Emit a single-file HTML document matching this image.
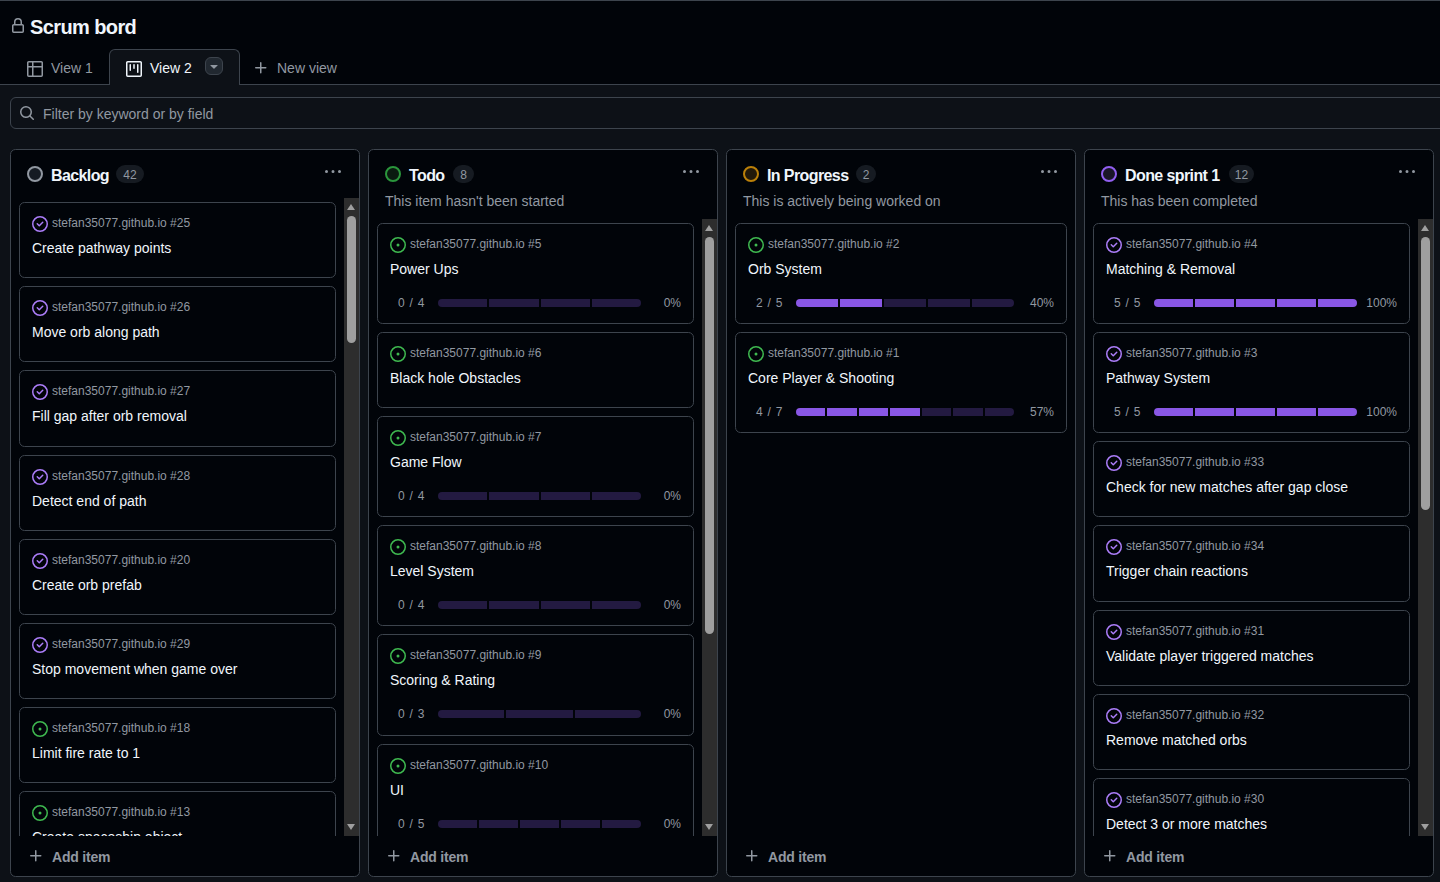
<!DOCTYPE html><html><head><meta charset="utf-8"><style>
*{box-sizing:border-box}
html,body{margin:0;padding:0}
body{width:1440px;height:882px;overflow:hidden;position:relative;background:#0d1117;font-family:"Liberation Sans",sans-serif;color:#f0f6fc}
.hdr{position:absolute;left:0;top:0;width:1440px;height:85px;background:#010409;border-top:1px solid #3d444d;border-bottom:1px solid #3d444d}
.lock{position:absolute;left:10px;top:18px}
.title{position:absolute;left:30px;top:14px;font-size:20px;font-weight:bold;line-height:26px;letter-spacing:-0.6px;color:#f0f6fc}
.tab{position:absolute;top:49px;height:36px;font-size:14px;line-height:20px;color:#9198a1}
.tabsel{position:absolute;left:109px;top:49px;width:131px;height:36px;background:#0d1117;border:1px solid #3d444d;border-bottom:none;border-radius:6px 6px 0 0}
.tabtxt{position:absolute;font-size:14px;line-height:20px;top:58px}
.ddb{position:absolute;left:205px;top:57px;width:18px;height:18px;border-radius:6px;background:#212830;border:1px solid #3d444d}
.filter{position:absolute;left:10px;top:97px;width:1450px;height:32px;border:1px solid #3d444d;border-radius:6px;background:#0d1117}
.ftxt{position:absolute;left:43px;top:104px;font-size:14px;line-height:20px;color:#9198a1}
.col{position:absolute;top:149px;width:350px;height:728px;background:#010409;border:1px solid #3d444d;border-radius:5.5px}
.cic{position:absolute;top:166px}
.ctitle{position:absolute;top:165.5px;font-size:16px;font-weight:bold;line-height:20px;letter-spacing:-0.6px;color:#f0f6fc;white-space:nowrap}
.pill{position:absolute;top:165px;height:18px;padding-top:2px;font-size:12px;line-height:17px;border-radius:9px;background:#161b22;color:#9198a1;text-align:center}
.kebab{position:absolute;top:164px;width:16px;height:16px}
.cdesc{position:absolute;top:191px;font-size:14px;line-height:20px;color:#9198a1;white-space:nowrap}
.clip{position:absolute;overflow:hidden}
.card{position:absolute;border:1px solid #3d444d;border-radius:5.5px;background:#010409}
.card .ic{position:absolute;left:12px;top:13px;width:16px;height:16px}
.card .ic svg{display:block}
.card .repo{position:absolute;left:32px;top:12px;font-size:12px;line-height:16px;color:#9198a1;white-space:nowrap}
.card .ttl{position:absolute;left:12px;top:35px;font-size:14px;line-height:20px;color:#f0f6fc;white-space:nowrap}
.plab{position:absolute;left:20px;top:71px;word-spacing:1.5px;font-size:12px;line-height:16px;color:#9198a1;white-space:nowrap}
.bar{position:absolute;left:60px;top:75px;height:8px;display:flex;gap:2px;border-radius:4px;overflow:hidden}
.bar span{flex:1;height:8px}
.pct{position:absolute;right:12px;top:71px;font-size:12px;line-height:16px;color:#9198a1}
.track{position:absolute;width:15px;background:#2d2d2d}
.thumb{position:absolute;left:3px;width:9px;background:#9f9f9f;border-radius:5.5px}
.up{position:absolute;left:3px;top:6px;width:0;height:0;border-left:4.5px solid transparent;border-right:4.5px solid transparent;border-bottom:6px solid #9f9f9f}
.dn{position:absolute;left:3px;bottom:6px;width:0;height:0;border-left:4.5px solid transparent;border-right:4.5px solid transparent;border-top:6px solid #9f9f9f}
.add{position:absolute;top:847px;height:20px;font-size:14px;line-height:20px;color:#9198a1;white-space:nowrap}
.add svg{position:absolute;left:8px;top:1px}
.add span{position:absolute;left:32px;top:0;font-weight:bold;letter-spacing:-0.2px}
</style></head><body><div class="hdr"></div><svg class="lock" width="16" height="16" viewBox="0 0 16 16" fill="#9198a1"><path d="M4 4a4 4 0 0 1 8 0v2h.25c.966 0 1.75.784 1.75 1.75v5.5A1.75 1.75 0 0 1 12.25 15h-8.5A1.75 1.75 0 0 1 2 13.25v-5.5C2 6.784 2.784 6 3.75 6H4Zm8.25 3.5h-8.5a.25.25 0 0 0-.25.25v5.5c0 .138.112.25.25.25h8.5a.25.25 0 0 0 .25-.25v-5.5a.25.25 0 0 0-.25-.25ZM10.5 6V4a2.5 2.5 0 1 0-5 0v2Z"/></svg><div class="title">Scrum bord</div><div class="tabsel"></div><svg style="position:absolute;left:27px;top:61px" width="16" height="16" viewBox="0 0 16 16" fill="#9198a1"><path d="M0 1.75C0 .784.784 0 1.75 0h12.5C15.216 0 16 .784 16 1.75v12.5A1.75 1.75 0 0 1 14.25 16H1.75A1.75 1.75 0 0 1 0 14.25ZM6.5 6.5v8h7.75a.25.25 0 0 0 .25-.25V6.5Zm8-1.5V1.75a.25.25 0 0 0-.25-.25H6.5V5Zm-13 1.5v7.75c0 .138.112.25.25.25H5v-8ZM5 5V1.5H1.75a.25.25 0 0 0-.25.25V5Z"/></svg><div class="tabtxt" style="left:51px;color:#9198a1">View 1</div><svg style="position:absolute;left:126px;top:61px" width="16" height="16" viewBox="0 0 16 16" fill="#f0f6fc"><path d="M1.75 0h12.5C15.216 0 16 .784 16 1.75v12.5A1.75 1.75 0 0 1 14.25 16H1.75A1.75 1.75 0 0 1 0 14.25V1.75C0 .784.784 0 1.75 0ZM1.5 1.75v12.5c0 .138.112.25.25.25h12.5a.25.25 0 0 0 .25-.25V1.75a.25.25 0 0 0-.25-.25H1.75a.25.25 0 0 0-.25.25ZM11.75 3a.75.75 0 0 1 .75.75v7.5a.75.75 0 0 1-1.5 0v-7.5a.75.75 0 0 1 .75-.75Zm-8.25.75a.75.75 0 0 1 1.5 0v5.5a.75.75 0 0 1-1.5 0ZM8 3a.75.75 0 0 1 .75.75v3.5a.75.75 0 0 1-1.5 0v-3.5A.75.75 0 0 1 8 3Z"/></svg><div class="tabtxt" style="left:150px;color:#f0f6fc">View 2</div><div class="ddb"><svg style="position:absolute;left:0px;top:0px" width="16" height="16" viewBox="0 0 16 16" fill="#9198a1"><path d="m4.427 7.427 3.396 3.396a.25.25 0 0 0 .354 0l3.396-3.396A.25.25 0 0 0 11.396 7H4.604a.25.25 0 0 0-.177.427Z"/></svg></div><svg style="position:absolute;left:253px;top:60px" width="16" height="16" viewBox="0 0 16 16" fill="#9198a1"><path d="M7.75 2a.75.75 0 0 1 .75.75V7h4.25a.75.75 0 0 1 0 1.5H8.5v4.25a.75.75 0 0 1-1.5 0V8.5H2.75a.75.75 0 0 1 0-1.5H7V2.75A.75.75 0 0 1 7.75 2Z"/></svg><div class="tabtxt" style="left:277px;color:#9198a1">New view</div><div class="filter"></div><svg style="position:absolute;left:19px;top:105px" width="16" height="16" viewBox="0 0 16 16" fill="#9198a1"><path d="M10.68 11.74a6 6 0 0 1-7.922-8.982 6 6 0 0 1 8.982 7.922l3.04 3.04a.749.749 0 0 1-.326 1.275.749.749 0 0 1-.734-.215ZM11.5 7a4.499 4.499 0 1 0-8.997 0A4.499 4.499 0 0 0 11.5 7Z"/></svg><div class="ftxt">Filter by keyword or by field</div><div class="col" style="left:10px"></div><div class="pill" style="left:116px;width:28px">42</div><svg class="cic" style="left:27px" width="16" height="16" viewBox="0 0 16 16"><circle cx="8" cy="8" r="7" fill="#151b23" stroke="#9198a1" stroke-width="2"/></svg><div class="ctitle" style="left:51px">Backlog</div><div class="kebab" style="left:325px"><svg width="16" height="16" viewBox="0 0 16 16" fill="#9198a1"><path d="M8 9a1.5 1.5 0 1 0 0-3 1.5 1.5 0 0 0 0 3ZM1.5 9a1.5 1.5 0 1 0 0-3 1.5 1.5 0 0 0 0 3Zm13 0a1.5 1.5 0 1 0 0-3 1.5 1.5 0 0 0 0 3Z"/></svg></div><div class="clip" style="left:11px;top:198px;width:348px;height:638px"><div class="card" style="left:8px;top:4px;width:317px;height:76px"><div class="ic"><svg width="16" height="16" viewBox="0 0 16 16" fill="#ab7df8"><path d="M11.28 6.78a.75.75 0 0 0-1.06-1.06L7.25 8.69 5.78 7.22a.75.75 0 0 0-1.06 1.06l2 2a.75.75 0 0 0 1.06 0l3.5-3.5Z"/><path d="M16 8A8 8 0 1 1 0 8a8 8 0 0 1 16 0Zm-1.5 0a6.5 6.5 0 1 0-13 0 6.5 6.5 0 0 0 13 0Z"/></svg></div><div class="repo">stefan35077.github.io #25</div><div class="ttl">Create pathway points</div></div><div class="card" style="left:8px;top:88px;width:317px;height:76px"><div class="ic"><svg width="16" height="16" viewBox="0 0 16 16" fill="#ab7df8"><path d="M11.28 6.78a.75.75 0 0 0-1.06-1.06L7.25 8.69 5.78 7.22a.75.75 0 0 0-1.06 1.06l2 2a.75.75 0 0 0 1.06 0l3.5-3.5Z"/><path d="M16 8A8 8 0 1 1 0 8a8 8 0 0 1 16 0Zm-1.5 0a6.5 6.5 0 1 0-13 0 6.5 6.5 0 0 0 13 0Z"/></svg></div><div class="repo">stefan35077.github.io #26</div><div class="ttl">Move orb along path</div></div><div class="card" style="left:8px;top:172px;width:317px;height:77px"><div class="ic"><svg width="16" height="16" viewBox="0 0 16 16" fill="#ab7df8"><path d="M11.28 6.78a.75.75 0 0 0-1.06-1.06L7.25 8.69 5.78 7.22a.75.75 0 0 0-1.06 1.06l2 2a.75.75 0 0 0 1.06 0l3.5-3.5Z"/><path d="M16 8A8 8 0 1 1 0 8a8 8 0 0 1 16 0Zm-1.5 0a6.5 6.5 0 1 0-13 0 6.5 6.5 0 0 0 13 0Z"/></svg></div><div class="repo">stefan35077.github.io #27</div><div class="ttl">Fill gap after orb removal</div></div><div class="card" style="left:8px;top:257px;width:317px;height:76px"><div class="ic"><svg width="16" height="16" viewBox="0 0 16 16" fill="#ab7df8"><path d="M11.28 6.78a.75.75 0 0 0-1.06-1.06L7.25 8.69 5.78 7.22a.75.75 0 0 0-1.06 1.06l2 2a.75.75 0 0 0 1.06 0l3.5-3.5Z"/><path d="M16 8A8 8 0 1 1 0 8a8 8 0 0 1 16 0Zm-1.5 0a6.5 6.5 0 1 0-13 0 6.5 6.5 0 0 0 13 0Z"/></svg></div><div class="repo">stefan35077.github.io #28</div><div class="ttl">Detect end of path</div></div><div class="card" style="left:8px;top:341px;width:317px;height:76px"><div class="ic"><svg width="16" height="16" viewBox="0 0 16 16" fill="#ab7df8"><path d="M11.28 6.78a.75.75 0 0 0-1.06-1.06L7.25 8.69 5.78 7.22a.75.75 0 0 0-1.06 1.06l2 2a.75.75 0 0 0 1.06 0l3.5-3.5Z"/><path d="M16 8A8 8 0 1 1 0 8a8 8 0 0 1 16 0Zm-1.5 0a6.5 6.5 0 1 0-13 0 6.5 6.5 0 0 0 13 0Z"/></svg></div><div class="repo">stefan35077.github.io #20</div><div class="ttl">Create orb prefab</div></div><div class="card" style="left:8px;top:425px;width:317px;height:76px"><div class="ic"><svg width="16" height="16" viewBox="0 0 16 16" fill="#ab7df8"><path d="M11.28 6.78a.75.75 0 0 0-1.06-1.06L7.25 8.69 5.78 7.22a.75.75 0 0 0-1.06 1.06l2 2a.75.75 0 0 0 1.06 0l3.5-3.5Z"/><path d="M16 8A8 8 0 1 1 0 8a8 8 0 0 1 16 0Zm-1.5 0a6.5 6.5 0 1 0-13 0 6.5 6.5 0 0 0 13 0Z"/></svg></div><div class="repo">stefan35077.github.io #29</div><div class="ttl">Stop movement when game over</div></div><div class="card" style="left:8px;top:509px;width:317px;height:76px"><div class="ic"><svg width="16" height="16" viewBox="0 0 16 16" fill="#3fb950"><path d="M8 9.5a1.5 1.5 0 1 0 0-3 1.5 1.5 0 0 0 0 3Z"/><path d="M8 0a8 8 0 1 1 0 16A8 8 0 0 1 8 0ZM1.5 8a6.5 6.5 0 1 0 13 0 6.5 6.5 0 0 0-13 0Z"/></svg></div><div class="repo">stefan35077.github.io #18</div><div class="ttl">Limit fire rate to 1</div></div><div class="card" style="left:8px;top:593px;width:317px;height:76px"><div class="ic"><svg width="16" height="16" viewBox="0 0 16 16" fill="#3fb950"><path d="M8 9.5a1.5 1.5 0 1 0 0-3 1.5 1.5 0 0 0 0 3Z"/><path d="M8 0a8 8 0 1 1 0 16A8 8 0 0 1 8 0ZM1.5 8a6.5 6.5 0 1 0 13 0 6.5 6.5 0 0 0-13 0Z"/></svg></div><div class="repo">stefan35077.github.io #13</div><div class="ttl">Create spaceship object</div></div><div class="track" style="left:333px;top:0;height:638px"><div class="up"></div><div class="dn"></div><div class="thumb" style="top:18px;height:127px"></div></div></div><div class="add" style="left:20px"><svg width="16" height="16" viewBox="0 0 16 16" fill="#9198a1"><path d="M7.75 2a.75.75 0 0 1 .75.75V7h4.25a.75.75 0 0 1 0 1.5H8.5v4.25a.75.75 0 0 1-1.5 0V8.5H2.75a.75.75 0 0 1 0-1.5H7V2.75A.75.75 0 0 1 7.75 2Z"/></svg><span>Add item</span></div><div class="col" style="left:368px"></div><div class="pill" style="left:453px;width:21px">8</div><svg class="cic" style="left:385px" width="16" height="16" viewBox="0 0 16 16"><circle cx="8" cy="8" r="7" fill="#0a1a10" stroke="#2a963c" stroke-width="2"/></svg><div class="ctitle" style="left:409px">Todo</div><div class="kebab" style="left:683px"><svg width="16" height="16" viewBox="0 0 16 16" fill="#9198a1"><path d="M8 9a1.5 1.5 0 1 0 0-3 1.5 1.5 0 0 0 0 3ZM1.5 9a1.5 1.5 0 1 0 0-3 1.5 1.5 0 0 0 0 3Zm13 0a1.5 1.5 0 1 0 0-3 1.5 1.5 0 0 0 0 3Z"/></svg></div><div class="cdesc" style="left:385px">This item hasn&#39;t been started</div><div class="clip" style="left:369px;top:219px;width:348px;height:617px"><div class="card" style="left:8px;top:4px;width:317px;height:101px"><div class="ic"><svg width="16" height="16" viewBox="0 0 16 16" fill="#3fb950"><path d="M8 9.5a1.5 1.5 0 1 0 0-3 1.5 1.5 0 0 0 0 3Z"/><path d="M8 0a8 8 0 1 1 0 16A8 8 0 0 1 8 0ZM1.5 8a6.5 6.5 0 1 0 13 0 6.5 6.5 0 0 0-13 0Z"/></svg></div><div class="repo">stefan35077.github.io #5</div><div class="ttl">Power Ups</div><div class="plab">0 / 4</div><div class="bar" style="width:203px"><span style="background:#231a41"></span><span style="background:#231a41"></span><span style="background:#231a41"></span><span style="background:#231a41"></span></div><div class="pct">0%</div></div><div class="card" style="left:8px;top:113px;width:317px;height:76px"><div class="ic"><svg width="16" height="16" viewBox="0 0 16 16" fill="#3fb950"><path d="M8 9.5a1.5 1.5 0 1 0 0-3 1.5 1.5 0 0 0 0 3Z"/><path d="M8 0a8 8 0 1 1 0 16A8 8 0 0 1 8 0ZM1.5 8a6.5 6.5 0 1 0 13 0 6.5 6.5 0 0 0-13 0Z"/></svg></div><div class="repo">stefan35077.github.io #6</div><div class="ttl">Black hole Obstacles</div></div><div class="card" style="left:8px;top:197px;width:317px;height:101px"><div class="ic"><svg width="16" height="16" viewBox="0 0 16 16" fill="#3fb950"><path d="M8 9.5a1.5 1.5 0 1 0 0-3 1.5 1.5 0 0 0 0 3Z"/><path d="M8 0a8 8 0 1 1 0 16A8 8 0 0 1 8 0ZM1.5 8a6.5 6.5 0 1 0 13 0 6.5 6.5 0 0 0-13 0Z"/></svg></div><div class="repo">stefan35077.github.io #7</div><div class="ttl">Game Flow</div><div class="plab">0 / 4</div><div class="bar" style="width:203px"><span style="background:#231a41"></span><span style="background:#231a41"></span><span style="background:#231a41"></span><span style="background:#231a41"></span></div><div class="pct">0%</div></div><div class="card" style="left:8px;top:306px;width:317px;height:101px"><div class="ic"><svg width="16" height="16" viewBox="0 0 16 16" fill="#3fb950"><path d="M8 9.5a1.5 1.5 0 1 0 0-3 1.5 1.5 0 0 0 0 3Z"/><path d="M8 0a8 8 0 1 1 0 16A8 8 0 0 1 8 0ZM1.5 8a6.5 6.5 0 1 0 13 0 6.5 6.5 0 0 0-13 0Z"/></svg></div><div class="repo">stefan35077.github.io #8</div><div class="ttl">Level System</div><div class="plab">0 / 4</div><div class="bar" style="width:203px"><span style="background:#231a41"></span><span style="background:#231a41"></span><span style="background:#231a41"></span><span style="background:#231a41"></span></div><div class="pct">0%</div></div><div class="card" style="left:8px;top:415px;width:317px;height:102px"><div class="ic"><svg width="16" height="16" viewBox="0 0 16 16" fill="#3fb950"><path d="M8 9.5a1.5 1.5 0 1 0 0-3 1.5 1.5 0 0 0 0 3Z"/><path d="M8 0a8 8 0 1 1 0 16A8 8 0 0 1 8 0ZM1.5 8a6.5 6.5 0 1 0 13 0 6.5 6.5 0 0 0-13 0Z"/></svg></div><div class="repo">stefan35077.github.io #9</div><div class="ttl">Scoring &amp; Rating</div><div class="plab">0 / 3</div><div class="bar" style="width:203px"><span style="background:#231a41"></span><span style="background:#231a41"></span><span style="background:#231a41"></span></div><div class="pct">0%</div></div><div class="card" style="left:8px;top:525px;width:317px;height:101px"><div class="ic"><svg width="16" height="16" viewBox="0 0 16 16" fill="#3fb950"><path d="M8 9.5a1.5 1.5 0 1 0 0-3 1.5 1.5 0 0 0 0 3Z"/><path d="M8 0a8 8 0 1 1 0 16A8 8 0 0 1 8 0ZM1.5 8a6.5 6.5 0 1 0 13 0 6.5 6.5 0 0 0-13 0Z"/></svg></div><div class="repo">stefan35077.github.io #10</div><div class="ttl">UI</div><div class="plab">0 / 5</div><div class="bar" style="width:203px"><span style="background:#231a41"></span><span style="background:#231a41"></span><span style="background:#231a41"></span><span style="background:#231a41"></span><span style="background:#231a41"></span></div><div class="pct">0%</div></div><div class="track" style="left:333px;top:0;height:617px"><div class="up"></div><div class="dn"></div><div class="thumb" style="top:18px;height:397px"></div></div></div><div class="add" style="left:378px"><svg width="16" height="16" viewBox="0 0 16 16" fill="#9198a1"><path d="M7.75 2a.75.75 0 0 1 .75.75V7h4.25a.75.75 0 0 1 0 1.5H8.5v4.25a.75.75 0 0 1-1.5 0V8.5H2.75a.75.75 0 0 1 0-1.5H7V2.75A.75.75 0 0 1 7.75 2Z"/></svg><span>Add item</span></div><div class="col" style="left:726px"></div><div class="pill" style="left:856px;width:20px">2</div><svg class="cic" style="left:743px" width="16" height="16" viewBox="0 0 16 16"><circle cx="8" cy="8" r="7" fill="#22190a" stroke="#bb8009" stroke-width="2"/></svg><div class="ctitle" style="left:767px">In Progress</div><div class="kebab" style="left:1041px"><svg width="16" height="16" viewBox="0 0 16 16" fill="#9198a1"><path d="M8 9a1.5 1.5 0 1 0 0-3 1.5 1.5 0 0 0 0 3ZM1.5 9a1.5 1.5 0 1 0 0-3 1.5 1.5 0 0 0 0 3Zm13 0a1.5 1.5 0 1 0 0-3 1.5 1.5 0 0 0 0 3Z"/></svg></div><div class="cdesc" style="left:743px">This is actively being worked on</div><div class="clip" style="left:727px;top:219px;width:348px;height:617px"><div class="card" style="left:8px;top:4px;width:332px;height:101px"><div class="ic"><svg width="16" height="16" viewBox="0 0 16 16" fill="#3fb950"><path d="M8 9.5a1.5 1.5 0 1 0 0-3 1.5 1.5 0 0 0 0 3Z"/><path d="M8 0a8 8 0 1 1 0 16A8 8 0 0 1 8 0ZM1.5 8a6.5 6.5 0 1 0 13 0 6.5 6.5 0 0 0-13 0Z"/></svg></div><div class="repo">stefan35077.github.io #2</div><div class="ttl">Orb System</div><div class="plab">2 / 5</div><div class="bar" style="width:218px"><span style="background:#8957e5"></span><span style="background:#8957e5"></span><span style="background:#231a41"></span><span style="background:#231a41"></span><span style="background:#231a41"></span></div><div class="pct">40%</div></div><div class="card" style="left:8px;top:113px;width:332px;height:101px"><div class="ic"><svg width="16" height="16" viewBox="0 0 16 16" fill="#3fb950"><path d="M8 9.5a1.5 1.5 0 1 0 0-3 1.5 1.5 0 0 0 0 3Z"/><path d="M8 0a8 8 0 1 1 0 16A8 8 0 0 1 8 0ZM1.5 8a6.5 6.5 0 1 0 13 0 6.5 6.5 0 0 0-13 0Z"/></svg></div><div class="repo">stefan35077.github.io #1</div><div class="ttl">Core Player &amp; Shooting</div><div class="plab">4 / 7</div><div class="bar" style="width:218px"><span style="background:#8957e5"></span><span style="background:#8957e5"></span><span style="background:#8957e5"></span><span style="background:#8957e5"></span><span style="background:#231a41"></span><span style="background:#231a41"></span><span style="background:#231a41"></span></div><div class="pct">57%</div></div></div><div class="add" style="left:736px"><svg width="16" height="16" viewBox="0 0 16 16" fill="#9198a1"><path d="M7.75 2a.75.75 0 0 1 .75.75V7h4.25a.75.75 0 0 1 0 1.5H8.5v4.25a.75.75 0 0 1-1.5 0V8.5H2.75a.75.75 0 0 1 0-1.5H7V2.75A.75.75 0 0 1 7.75 2Z"/></svg><span>Add item</span></div><div class="col" style="left:1084px"></div><div class="pill" style="left:1229px;width:25px">12</div><svg class="cic" style="left:1101px" width="16" height="16" viewBox="0 0 16 16"><circle cx="8" cy="8" r="7" fill="#1a1628" stroke="#915ff0" stroke-width="2"/></svg><div class="ctitle" style="left:1125px">Done sprint 1</div><div class="kebab" style="left:1399px"><svg width="16" height="16" viewBox="0 0 16 16" fill="#9198a1"><path d="M8 9a1.5 1.5 0 1 0 0-3 1.5 1.5 0 0 0 0 3ZM1.5 9a1.5 1.5 0 1 0 0-3 1.5 1.5 0 0 0 0 3Zm13 0a1.5 1.5 0 1 0 0-3 1.5 1.5 0 0 0 0 3Z"/></svg></div><div class="cdesc" style="left:1101px">This has been completed</div><div class="clip" style="left:1085px;top:219px;width:348px;height:617px"><div class="card" style="left:8px;top:4px;width:317px;height:101px"><div class="ic"><svg width="16" height="16" viewBox="0 0 16 16" fill="#ab7df8"><path d="M11.28 6.78a.75.75 0 0 0-1.06-1.06L7.25 8.69 5.78 7.22a.75.75 0 0 0-1.06 1.06l2 2a.75.75 0 0 0 1.06 0l3.5-3.5Z"/><path d="M16 8A8 8 0 1 1 0 8a8 8 0 0 1 16 0Zm-1.5 0a6.5 6.5 0 1 0-13 0 6.5 6.5 0 0 0 13 0Z"/></svg></div><div class="repo">stefan35077.github.io #4</div><div class="ttl">Matching &amp; Removal</div><div class="plab">5 / 5</div><div class="bar" style="width:203px"><span style="background:#8957e5"></span><span style="background:#8957e5"></span><span style="background:#8957e5"></span><span style="background:#8957e5"></span><span style="background:#8957e5"></span></div><div class="pct">100%</div></div><div class="card" style="left:8px;top:113px;width:317px;height:101px"><div class="ic"><svg width="16" height="16" viewBox="0 0 16 16" fill="#ab7df8"><path d="M11.28 6.78a.75.75 0 0 0-1.06-1.06L7.25 8.69 5.78 7.22a.75.75 0 0 0-1.06 1.06l2 2a.75.75 0 0 0 1.06 0l3.5-3.5Z"/><path d="M16 8A8 8 0 1 1 0 8a8 8 0 0 1 16 0Zm-1.5 0a6.5 6.5 0 1 0-13 0 6.5 6.5 0 0 0 13 0Z"/></svg></div><div class="repo">stefan35077.github.io #3</div><div class="ttl">Pathway System</div><div class="plab">5 / 5</div><div class="bar" style="width:203px"><span style="background:#8957e5"></span><span style="background:#8957e5"></span><span style="background:#8957e5"></span><span style="background:#8957e5"></span><span style="background:#8957e5"></span></div><div class="pct">100%</div></div><div class="card" style="left:8px;top:222px;width:317px;height:76px"><div class="ic"><svg width="16" height="16" viewBox="0 0 16 16" fill="#ab7df8"><path d="M11.28 6.78a.75.75 0 0 0-1.06-1.06L7.25 8.69 5.78 7.22a.75.75 0 0 0-1.06 1.06l2 2a.75.75 0 0 0 1.06 0l3.5-3.5Z"/><path d="M16 8A8 8 0 1 1 0 8a8 8 0 0 1 16 0Zm-1.5 0a6.5 6.5 0 1 0-13 0 6.5 6.5 0 0 0 13 0Z"/></svg></div><div class="repo">stefan35077.github.io #33</div><div class="ttl">Check for new matches after gap close</div></div><div class="card" style="left:8px;top:306px;width:317px;height:77px"><div class="ic"><svg width="16" height="16" viewBox="0 0 16 16" fill="#ab7df8"><path d="M11.28 6.78a.75.75 0 0 0-1.06-1.06L7.25 8.69 5.78 7.22a.75.75 0 0 0-1.06 1.06l2 2a.75.75 0 0 0 1.06 0l3.5-3.5Z"/><path d="M16 8A8 8 0 1 1 0 8a8 8 0 0 1 16 0Zm-1.5 0a6.5 6.5 0 1 0-13 0 6.5 6.5 0 0 0 13 0Z"/></svg></div><div class="repo">stefan35077.github.io #34</div><div class="ttl">Trigger chain reactions</div></div><div class="card" style="left:8px;top:391px;width:317px;height:76px"><div class="ic"><svg width="16" height="16" viewBox="0 0 16 16" fill="#ab7df8"><path d="M11.28 6.78a.75.75 0 0 0-1.06-1.06L7.25 8.69 5.78 7.22a.75.75 0 0 0-1.06 1.06l2 2a.75.75 0 0 0 1.06 0l3.5-3.5Z"/><path d="M16 8A8 8 0 1 1 0 8a8 8 0 0 1 16 0Zm-1.5 0a6.5 6.5 0 1 0-13 0 6.5 6.5 0 0 0 13 0Z"/></svg></div><div class="repo">stefan35077.github.io #31</div><div class="ttl">Validate player triggered matches</div></div><div class="card" style="left:8px;top:475px;width:317px;height:76px"><div class="ic"><svg width="16" height="16" viewBox="0 0 16 16" fill="#ab7df8"><path d="M11.28 6.78a.75.75 0 0 0-1.06-1.06L7.25 8.69 5.78 7.22a.75.75 0 0 0-1.06 1.06l2 2a.75.75 0 0 0 1.06 0l3.5-3.5Z"/><path d="M16 8A8 8 0 1 1 0 8a8 8 0 0 1 16 0Zm-1.5 0a6.5 6.5 0 1 0-13 0 6.5 6.5 0 0 0 13 0Z"/></svg></div><div class="repo">stefan35077.github.io #32</div><div class="ttl">Remove matched orbs</div></div><div class="card" style="left:8px;top:559px;width:317px;height:76px"><div class="ic"><svg width="16" height="16" viewBox="0 0 16 16" fill="#ab7df8"><path d="M11.28 6.78a.75.75 0 0 0-1.06-1.06L7.25 8.69 5.78 7.22a.75.75 0 0 0-1.06 1.06l2 2a.75.75 0 0 0 1.06 0l3.5-3.5Z"/><path d="M16 8A8 8 0 1 1 0 8a8 8 0 0 1 16 0Zm-1.5 0a6.5 6.5 0 1 0-13 0 6.5 6.5 0 0 0 13 0Z"/></svg></div><div class="repo">stefan35077.github.io #30</div><div class="ttl">Detect 3 or more matches</div></div><div class="track" style="left:333px;top:0;height:617px"><div class="up"></div><div class="dn"></div><div class="thumb" style="top:18px;height:273px"></div></div></div><div class="add" style="left:1094px"><svg width="16" height="16" viewBox="0 0 16 16" fill="#9198a1"><path d="M7.75 2a.75.75 0 0 1 .75.75V7h4.25a.75.75 0 0 1 0 1.5H8.5v4.25a.75.75 0 0 1-1.5 0V8.5H2.75a.75.75 0 0 1 0-1.5H7V2.75A.75.75 0 0 1 7.75 2Z"/></svg><span>Add item</span></div></body></html>
